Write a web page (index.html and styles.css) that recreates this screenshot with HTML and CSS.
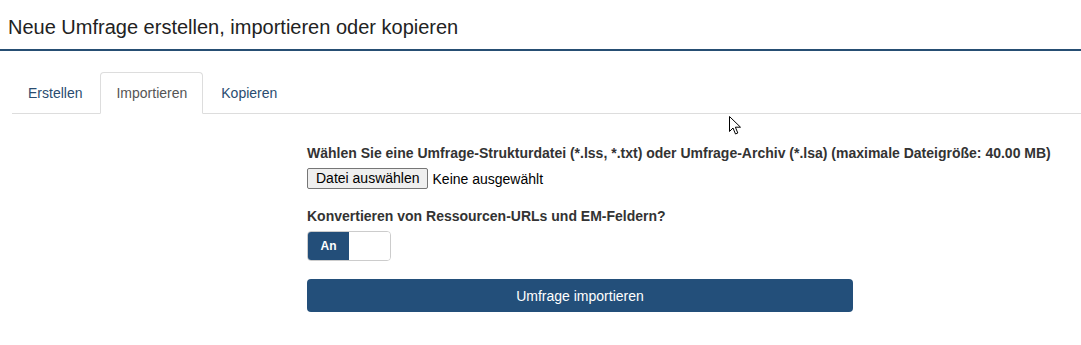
FILE: index.html
```html
<!DOCTYPE html>
<html lang="de">
  <head>
    <meta charset="UTF-8" />
    <title>Neue Umfrage</title>
    <link rel="stylesheet" href="styles.css">
  </head>
  <body>
    <div class="page-header">
      <h3>Neue Umfrage erstellen, importieren oder kopieren</h3>
    </div>

    <ul class="nav-tabs">
      <li><a href="#">Erstellen</a></li>
      <li class="active"><a href="#">Importieren</a></li>
      <li><a href="#">Kopieren</a></li>
    </ul>

    <div class="tab-content">
      <div class="form-col">
        <div class="form-group">
          <label class="control-label">Wählen Sie eine Umfrage-Strukturdatei (*.lss, *.txt) oder Umfrage-Archiv (*.lsa) (maximale Dateigröße: 40.00 MB)</label>
          <div class="file-input">
            <span class="file-btn">Datei auswählen</span>
            <span class="file-name">Keine ausgewählt</span>
          </div>
        </div>

        <div class="form-group">
          <label class="control-label">Konvertieren von Ressourcen-URLs und EM-Feldern?</label>
          <div class="switch">
            <span class="switch-on">An</span>
            <span class="switch-off"></span>
          </div>
        </div>

        <button class="btn-primary">Umfrage importieren</button>
      </div>
    </div>

    <!-- mouse pointer left in the screenshot -->
    <svg class="cursor" width="13" height="20" viewBox="0 0 13 20">
      <path d="M0.5 0.5 L0.5 15.5 L4 12 L6.5 18 L8.8 17 L6.4 11.2 L11.5 11.2 Z" fill="#fff" stroke="#000" stroke-width="1"/>
    </svg>
  </body>
</html>
```

FILE: styles.css
```css
body {
  margin: 0;
  font-family: "Liberation Sans", Arial, sans-serif;
  font-size: 14px;
  color: #333333;
  background-color: #ffffff;
  position: relative;
  height: 345px;
  overflow: hidden;
}

.page-header {
  border-bottom: 2px solid #264e73;
  padding: 0 8px;
}

.page-header h3 {
  margin: 0;
  padding: 16px 0 11px;
  font-size: 20px;
  font-weight: normal;
  line-height: 22px;
  color: #222222;
}

.nav-tabs {
  list-style: none;
  margin: 21px 0 0 12px;
  padding: 0;
  display: flex;
  border-bottom: 1px solid #dddddd;
}

.nav-tabs li {
  margin-right: 2px;
  margin-bottom: -1px;
}

.nav-tabs a {
  display: block;
  padding: 10px 15px;
  line-height: 20px;
  color: #2a4c70;
  text-decoration: none;
  border: 1px solid transparent;
  border-radius: 4px 4px 0 0;
}

.nav-tabs .active a {
  color: #555555;
  background-color: #ffffff;
  border-color: #dddddd;
  border-bottom-color: transparent;
}

.tab-content {
  display: flex;
  padding-left: 307px;
  padding-top: 29px;
}

.form-col {
  width: 546px;
}

.form-group {
  margin-bottom: 17px;
}

.form-group:last-of-type {
  margin-bottom: 18px;
}

.control-label {
  display: block;
  font-size: 14px;
  font-weight: bold;
  line-height: 20px;
  white-space: nowrap;
  color: #333333;
  margin-bottom: 5px;
}

.file-input {
  display: flex;
  align-items: center;
  font-size: 14px;
  color: #000000;
}

.file-btn {
  display: inline-block;
  padding: 2px 7px 2px 8px;
  line-height: 15px;
  background-color: #efefef;
  border: 1px solid #767676;
  border-radius: 2px;
  margin-right: 5px;
}

.switch {
  display: flex;
  width: 82px;
  height: 28px;
  border: 1px solid #cccccc;
  border-radius: 4px;
  overflow: hidden;
}

.switch-on {
  width: 41px;
  background-color: #234e79;
  color: #ffffff;
  font-size: 12px;
  font-weight: bold;
  display: flex;
  align-items: center;
  justify-content: center;
}

.switch-off {
  flex: 1;
  background-color: #ffffff;
}

.btn-primary {
  display: block;
  width: 100%;
  height: 33px;
  border: none;
  border-radius: 4px;
  background-color: #234f7a;
  color: #ffffff;
  font-family: "Liberation Sans", Arial, sans-serif;
  font-size: 14px;
}

.cursor {
  position: absolute;
  left: 729px;
  top: 116px;
}
```
